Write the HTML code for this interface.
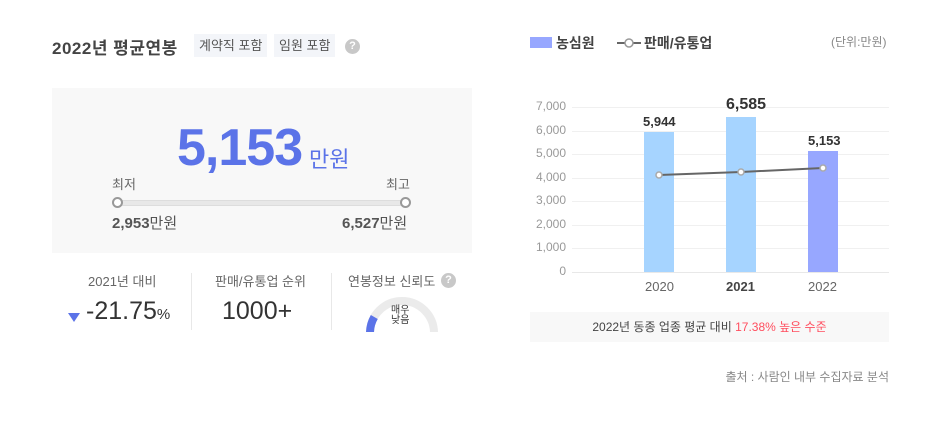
<!DOCTYPE html>
<html><head><meta charset="utf-8"><style>
*{margin:0;padding:0;box-sizing:border-box}
body{width:947px;height:429px;background:#fff;font-family:"Liberation Sans","Noto Sans CJK KR",sans-serif;position:relative;overflow:hidden;color:#333}
.a{position:absolute;white-space:nowrap}
.tag{position:absolute;top:34px;height:23px;background:#f3f5f9;color:#555;font-size:13px;line-height:23px;padding:0 5px}
.q{position:absolute;width:15px;height:15px;border-radius:50%;background:#c8c8c8;color:#fff;font-size:11px;font-weight:bold;text-align:center;line-height:15px}
.yl{position:absolute;right:381px;font-size:12px;color:#999;text-align:right}
.gl{position:absolute;left:572px;width:317px;height:1px;background:#f0f0f0}
</style></head><body>
<div class="a" style="left:52px;top:34px;font-size:17px;font-weight:bold;color:#444;letter-spacing:0.5px">2022년 평균연봉</div>
<div class="tag" style="left:194px">계약직 포함</div>
<div class="tag" style="left:274px">임원 포함</div>
<div class="q" style="left:345px;top:39px">?</div>

<div class="a" style="left:52px;top:88px;width:420px;height:165px;background:#f8f8f8"></div>
<div class="a" style="left:177px;top:118px;font-size:52px;font-weight:bold;color:#5b73e8;letter-spacing:-1px">5,153</div>
<div class="a" style="left:309px;top:142px;font-size:22px;color:#5b73e8">만원</div>
<div class="a" style="left:112px;top:174px;font-size:13px;color:#666">최저</div>
<div class="a" style="left:386px;top:174px;font-size:13px;color:#666">최고</div>
<div class="a" style="left:118px;top:200px;width:288px;height:6px;background:#e8e8e8;border:1px solid #ddd;border-radius:3px"></div>
<div class="a" style="left:112px;top:197px;width:11px;height:11px;border-radius:50%;border:2px solid #999;background:#fff"></div>
<div class="a" style="left:400px;top:197px;width:11px;height:11px;border-radius:50%;border:2px solid #999;background:#fff"></div>
<div class="a" style="left:112px;top:212px;font-size:15px;color:#555"><b>2,953</b>만원</div>
<div class="a" style="left:342px;top:212px;font-size:15px;color:#555"><b>6,527</b>만원</div>

<div class="a" style="left:191px;top:273px;width:1px;height:57px;background:#e8e8e8"></div>
<div class="a" style="left:331px;top:273px;width:1px;height:57px;background:#e8e8e8"></div>
<div class="a" style="left:88px;top:271px;font-size:13px;color:#666">2021년 대비</div>
<div class="a" style="left:68px;top:313px;width:0;height:0;border-left:6px solid transparent;border-right:6px solid transparent;border-top:9px solid #5b73e8"></div>
<div class="a" style="left:86px;top:297px;font-size:25px;color:#333">-21.75<span style="font-size:15px">%</span></div>
<div class="a" style="left:215px;top:271px;font-size:13px;color:#666">판매/유통업 순위</div>
<div class="a" style="left:222px;top:297px;font-size:25px;color:#333">1000+</div>
<div class="a" style="left:348px;top:271px;font-size:13px;color:#666">연봉정보 신뢰도</div>
<div class="q" style="left:441px;top:273px">?</div>
<svg class="a" style="left:360px;top:294px" width="84" height="38"><circle cx="42" cy="39" r="32" fill="none" stroke="#ebebeb" stroke-width="8"/><path d="M10 39 A32 32 0 0 1 14.3 23" fill="none" stroke="#5b73e8" stroke-width="8"/></svg>
<div class="a" style="left:391px;top:306px;font-size:10px;line-height:10px;color:#333;text-align:center">매우<br>낮음</div>

<div class="a" style="left:530px;top:37px;width:22px;height:11px;background:#97a7ff"></div>
<div class="a" style="left:556px;top:33px;font-size:14px;font-weight:bold;color:#444">농심원</div>
<svg class="a" style="left:617px;top:36px" width="24" height="14"><line x1="0" y1="7" x2="24" y2="7" stroke="#666" stroke-width="2"/><circle cx="12" cy="7" r="4" fill="#fff" stroke="#999" stroke-width="1.5"/></svg>
<div class="a" style="left:644px;top:33px;font-size:14px;font-weight:bold;color:#444">판매/유통업</div>
<div class="a" style="left:831px;top:33px;font-size:12px;color:#888">(단위:만원)</div>

<div class="gl" style="top:107px"></div><div class="gl" style="top:131px"></div><div class="gl" style="top:154px"></div><div class="gl" style="top:178px"></div><div class="gl" style="top:201px"></div><div class="gl" style="top:225px"></div><div class="gl" style="top:248px"></div><div class="gl" style="top:272px;background:#e8e8e8"></div>
<div class="yl" style="top:99px">7,000</div><div class="yl" style="top:123px">6,000</div><div class="yl" style="top:146px">5,000</div><div class="yl" style="top:170px">4,000</div><div class="yl" style="top:193px">3,000</div><div class="yl" style="top:217px">2,000</div><div class="yl" style="top:240px">1,000</div><div class="yl" style="top:264px">0</div>
<div class="a" style="left:644px;top:132px;width:30px;height:140px;background:#a6d4ff"></div>
<div class="a" style="left:726px;top:117px;width:30px;height:155px;background:#a6d4ff"></div>
<div class="a" style="left:808px;top:151px;width:30px;height:121px;background:#97a7ff"></div>
<div class="a" style="left:643px;top:114px;font-size:13px;font-weight:bold;color:#333">5,944</div>
<div class="a" style="left:726px;top:96px;font-size:16px;font-weight:bold;color:#333">6,585</div>
<div class="a" style="left:808px;top:133px;font-size:13px;font-weight:bold;color:#333">5,153</div>
<svg class="a" style="left:0;top:0" width="947" height="300"><polyline points="659,175 741,172 823,168" fill="none" stroke="#666" stroke-width="2"/><g fill="#fff" stroke="#aaa" stroke-width="1.5"><circle cx="659" cy="175" r="3"/><circle cx="741" cy="172" r="3"/><circle cx="823" cy="168" r="3"/></g></svg>
<div class="a" style="left:645px;top:279px;font-size:13px;color:#666">2020</div>
<div class="a" style="left:726px;top:279px;font-size:13px;font-weight:bold;color:#444">2021</div>
<div class="a" style="left:808px;top:279px;font-size:13px;color:#666">2022</div>
<div class="a" style="left:530px;top:312px;width:359px;height:30px;background:#f8f8f8;font-size:12px;line-height:30px;text-align:center;color:#444">2022년 동종 업종 평균 대비 <span style="color:#ff4d5e">17.38% 높은 수준</span></div>
<div class="a" style="right:58px;top:368px;font-size:12px;color:#888">출처 : 사람인 내부 수집자료 분석</div>
</body></html>
